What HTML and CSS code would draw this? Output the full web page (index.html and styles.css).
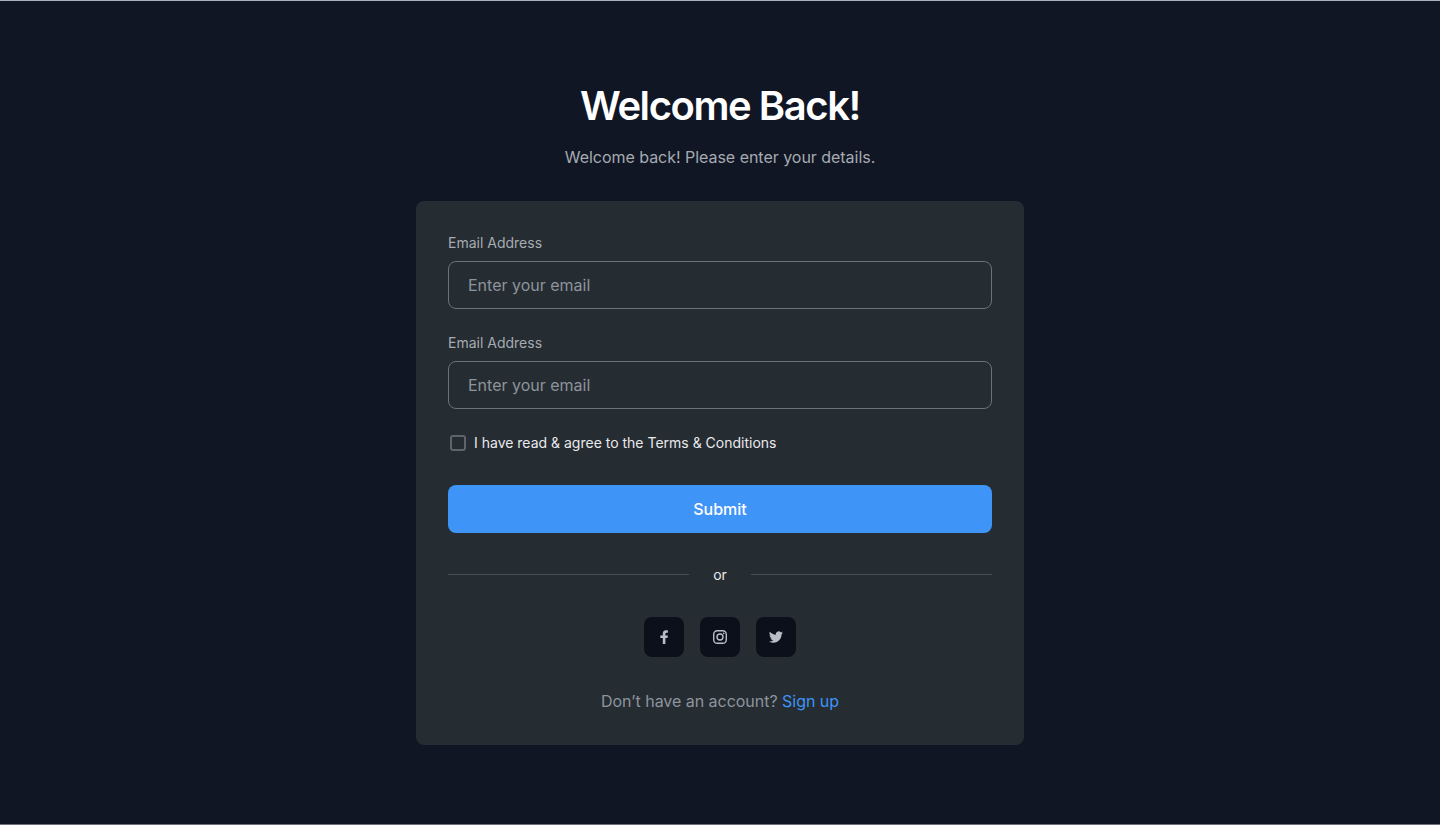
FILE: index.html
```html
<!DOCTYPE html>
<html lang="en">
<head>
<meta charset="utf-8">
<title>Welcome Back</title>
<link rel="stylesheet" href="styles.css">
</head>
<body>
<main class="page">
  <h1 class="title">Welcome Back!</h1>
  <p class="subtitle">Welcome back! Please enter your details.</p>
  <form class="card">
    <label class="label" for="email">Email Address</label>
    <input class="input" id="email" type="text" placeholder="Enter your email">
    <label class="label" for="email2">Email Address</label>
    <input class="input" id="email2" type="text" placeholder="Enter your email">
    <label class="agree"><input class="check" type="checkbox"><span class="agree-text">I have read &amp; agree to the Terms &amp; Conditions</span></label>
    <button class="submit" type="button">Submit</button>
    <div class="divider"><span class="or">or</span></div>
    <div class="socials">
      <a class="social"><svg width="16" height="16" viewBox="0 0 16 16" fill="#b8bdc6"><path d="M9.4 15V9h2.1l.4-2.5H9.4V5.1c0-.8.35-1.4 1.45-1.4h1.1V1.4s-.95-.2-1.9-.2C8 1.200 6.800 2.400 6.800 4.600v1.900H4.300V9h2.500v6z"/></svg></a>
      <a class="social"><svg width="16" height="16" viewBox="0 0 16 16" fill="none" stroke="#b8bdc6" stroke-width="1.4"><rect x="1.700" y="1.700" width="12.600" height="12.600" rx="3.600"/><circle cx="8" cy="8" r="3"/><circle cx="11.700" cy="4.300" r=".85" fill="#b8bdc6" stroke="none"/></svg></a>
      <a class="social"><svg width="14" height="14" viewBox="0 0 24 24" fill="#b8bdc6"><path d="M23.95 4.57a10 10 0 0 1-2.82.77 4.96 4.96 0 0 0 2.16-2.72c-.95.55-2 .95-3.13 1.18a4.92 4.92 0 0 0-8.38 4.48C7.69 8.1 4.07 6.13 1.64 3.16a4.93 4.93 0 0 0 1.52 6.57 4.9 4.9 0 0 1-2.23-.61v.06a4.92 4.92 0 0 0 3.95 4.83 5 5 0 0 1-2.21.08 4.94 4.94 0 0 0 4.6 3.42A9.87 9.87 0 0 1 0 19.54a13.94 13.94 0 0 0 7.55 2.21c9.05 0 14-7.5 14-13.98 0-.21 0-.42-.02-.63a9.94 9.94 0 0 0 2.46-2.55z"/></svg></a>
    </div>
    <p class="foot">Don’t have an account? <a class="link">Sign up</a></p>
  </form>
</main>
</body>
</html>
```

FILE: styles.css
```css
* { box-sizing: border-box; }
body { margin: 0; background: #101624; font-family: Inter, "Liberation Sans", sans-serif; }
.page { height: 825px; display: flex; flex-direction: column; align-items: center; padding-top: 81px; border-top: 1px solid #a9b2c0; border-bottom: 1px solid #6c717b; }
.title { margin: 0; color: #fff; font-size: 40px; font-weight: 600; line-height: 48px; letter-spacing: -1.44px; }
.subtitle { margin: 15px 0 32px; color: #a6abb1; font-size: 16px; line-height: 24px; letter-spacing: -0.03px; }
.card { width: 608px; height: 544px; padding: 32px; background: #252c32; border-radius: 8px; display: flex; flex-direction: column; }
.label { color: #a6abb1; font-size: 14px; line-height: 20px; margin-bottom: 8px; }
.input { width: 100%; height: 48px; flex: none; padding: 0 19px; margin: 0 0 24px; background: transparent; border: 1px solid #6b7279; border-radius: 8px; font: 16px/24px Inter, sans-serif; }
.input::placeholder { color: #8d949c; opacity: 1; }
.agree { display: flex; align-items: center; gap: 8px; height: 20px; padding-left: 2px; color: #e9eaec; font-size: 14px; }
.agree-text { line-height: 20px; }
.check { appearance: none; width: 16px; height: 16px; margin: 0; border: 2px solid #5d646c; border-radius: 3px; }
.submit { height: 48px; margin-top: 32px; border: 0; border-radius: 8px; background: #3f94f8; color: #fff; font: 500 16px/24px Inter, sans-serif; }
.divider { display: flex; align-items: center; gap: 24px; margin-top: 31px; height: 20px; color: #e9eaec; font-size: 14px; }
.divider::before, .divider::after { content: ""; flex: 1; height: 1px; background: #474e55; }
.socials { display: flex; justify-content: center; gap: 16px; margin-top: 33px; }
.social { width: 40px; height: 40px; border-radius: 8px; background: #0b101a; display: flex; align-items: center; justify-content: center; }
.foot { margin: 32px 0 0; text-align: center; color: #8d949c; font-size: 16px; line-height: 24px; letter-spacing: -0.03px; }
.link { color: #3f94f8; }
```
